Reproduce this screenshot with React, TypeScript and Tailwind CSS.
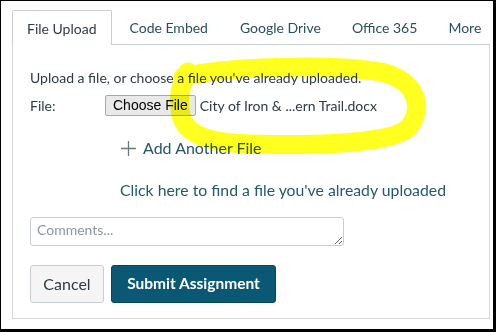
import React from "react";

const lato = { fontFamily: "Lato, 'Open Sans', sans-serif" };

export default function App() {
  return (
    <div
      className="relative w-[496px] h-[332px] bg-white border-black border-l-[1px] border-t-[1px] border-r-[3px] border-b-[3px] overflow-hidden"
      style={lato}
    >
      <div className="pl-[11px] pt-[9px] pr-[3px] h-full flex flex-col">
        {/* Tabs */}
        <div className="flex items-end text-[14px]">
          <div className="h-[35px] border border-b-0 border-[#c7cdd1] rounded-t-[2px] px-[14px] flex items-center text-[#2d3b45]">
            File Upload
          </div>
          <div className="flex-1 flex items-center h-[35px] border-b border-[#c7cdd1] text-[#2a4f5f]">
            <span className="pl-[18px]">Code Embed</span>
            <span className="pl-[32px]">Google Drive</span>
            <span className="pl-[31px]">Office 365</span>
            <span className="pl-[31px]">More</span>
          </div>
        </div>
        {/* Panel */}
        <div className="h-[274px] border border-t-0 border-[#d5d9dc] pl-[17px] pt-[24px] text-[#2d3b45]">
          <div className="text-[14px] leading-[17px]">
            Upload a file, or choose a file you've already uploaded.
          </div>
          <div className="flex items-center mt-[8px] h-[22px]">
            <span className="w-[75px] text-[14px]">File:</span>
            <button
              className="h-[21px] px-[7px] bg-[#e9e9e9] border border-[#a9a9a9] rounded-[2px] text-[14px] text-black leading-none"
              style={{ fontFamily: "'Liberation Sans', Arial, sans-serif" }}
            >
              Choose File
            </button>
            <span className="ml-[4px] text-[14px]">City of Iron &amp; ...ern Trail.docx</span>
          </div>
          <div className="flex items-center mt-[22px] ml-[90px] h-[20px] text-[16px] text-[#2a5468]">
            <svg width="17" height="17" viewBox="0 0 16 16" className="mr-[6px]">
              <path d="M8 1 V15 M1 8 H15" stroke="#6b7780" strokeWidth="1.2" />
            </svg>
            Add Another File
          </div>
          <div className="mt-[22px] ml-[90px] text-[15.8px] text-[#1f5a6f] leading-[19px]">
            Click here to find a file you've already uploaded
          </div>
          <textarea
            placeholder="Comments..."
            className="block mt-[18px] w-[314px] h-[29px] border border-[#c7cdd1] rounded-[3px] px-[6px] py-[3px] text-[14px] leading-[18px] placeholder:text-[#8b959c] resize-y outline-none"
          />
          <div className="flex gap-[7px] mt-[19px]">
            <button className="h-[38px] w-[74px] bg-[#f5f5f5] border border-[#c7cdd1] rounded-[3px] text-[16px] text-[#2d3b45]">
              Cancel
            </button>
            <button className="h-[38px] w-[165px] bg-[#0b5874] border border-[#08465c] rounded-[3px] text-[15.5px] text-white font-bold">
              Submit Assignment
            </button>
          </div>
        </div>
      </div>
      {/* Yellow highlighter annotation */}
      <svg
        className="absolute left-0 top-0 pointer-events-none mix-blend-multiply"
        width="496"
        height="332"
        viewBox="0 0 496 332"
      >
        <path
          d="M182 76 C 220 66, 330 62, 380 71 C 418 80, 422 108, 408 126 C 394 142, 320 145, 250 143 C 210 142, 184 134, 180 114 C 177 98, 178 86, 187 71"
          fill="none"
          stroke="#ffff20"
          strokeWidth="19"
          strokeLinecap="round"
          strokeLinejoin="round"
        />
      </svg>
    </div>
  );
}
